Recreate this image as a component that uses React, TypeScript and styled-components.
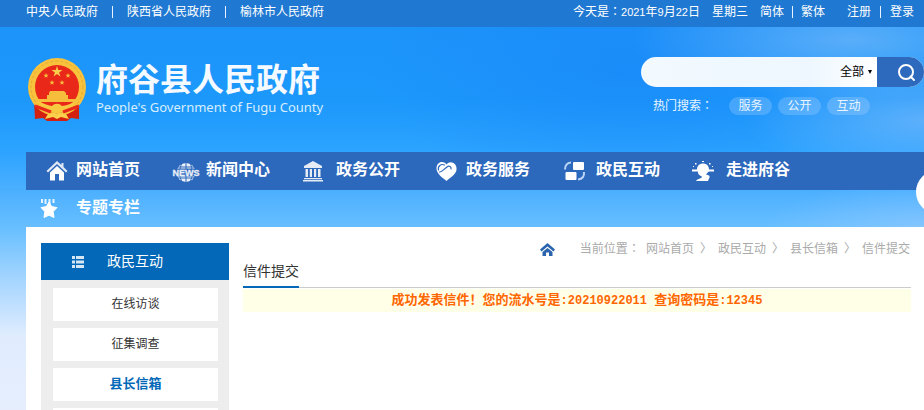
import React from "react";
import styled, { createGlobalStyle, css } from "styled-components";

const sans = `"Liberation Sans", "Noto Sans CJK SC", sans-serif`;

const GlobalStyle = createGlobalStyle`
  *, *::before, *::after { box-sizing: border-box; }
  body {
    margin: 0;
    font: 12px/18px ${sans};
    color: #333;
    background: #e6eefe;
    overflow: hidden;
  }
  a { color: inherit; text-decoration: none; }
  ul, ol { list-style: none; margin: 0; padding: 0; }
  h1, h2, p { margin: 0; font-weight: 400; }
`;

const Page = styled.div`
  position: relative;
  min-height: 100vh;
  overflow: hidden;
  display: flex;
  flex-direction: column;
  background:
    radial-gradient(ellipse 220px 60px at 92% 40px, rgba(150, 200, 250, 0.5), transparent),
    radial-gradient(ellipse 180px 60px at 100% 120px, rgba(150, 195, 250, 0.5), transparent),
    radial-gradient(ellipse 160px 50px at 100% 230px, rgba(160, 205, 255, 0.5), transparent),
    radial-gradient(ellipse 260px 120px at 68% 70px, rgba(25, 130, 248, 0.5), transparent),
    linear-gradient(#1c92f8 0, #1c98fb 100px, #2ba3ff 150px, #4fb1ff 195px, #68bfff 228px, #a5d5fe 280px, #dfecfe 335px, #e6eefe 410px);
`;

const TopBar = styled.header`
  display: flex;
  justify-content: space-between;
  height: 27px;
  padding: 3px 10px 0 26px;
  background: #1f79d2;
  color: #fff;
  white-space: nowrap;
`;

const LinkGroup = styled.nav<{ $gap: number }>`
  display: flex;
  gap: ${(p) => p.$gap}px;
`;

const Divider = styled.span`
  width: 1px;
  height: 12px;
  margin-top: 3px;
  background: #e8f3ff;
`;

const TopRight = styled.div`
  display: flex;
`;

const Today = styled.span`
  margin-right: 12px;
`;

const Digits = styled.span`
  font-size: 11px;
`;

const Colon = styled.span`
  font-family: "Noto Sans CJK TC", sans-serif;
  line-height: 1;
`;

const Account = styled.div`
  display: flex;
  margin-left: 22px;
`;

const Banner = styled.div`
  display: flex;
  justify-content: space-between;
  height: 125px;
  padding: 30px 0 0 26px;
`;

const Brand = styled.a`
  display: flex;
  gap: 10px;
  color: #f4faff;
  white-space: nowrap;
`;

const BrandText = styled.div`
  display: flex;
  flex-direction: column;
`;

const BrandName = styled.h1`
  font: 700 32px/41px "Noto Sans CJK SC", sans-serif;
`;

const BrandSub = styled.span`
  font: 13px/18px "Noto Sans", sans-serif;
  color: #d6edff;
`;

const SearchArea = styled.div`
  display: flex;
  flex-direction: column;
  gap: 10px;
  width: 283px;
`;

const SearchBox = styled.form`
  display: flex;
  height: 30px;
  border-radius: 15px;
  overflow: hidden;
  background: linear-gradient(90deg, #f2f9ff, #eef7ff 60%, #fff 85%);
`;

const SearchInput = styled.input`
  flex: 1;
  min-width: 0;
  padding: 0 14px;
  border: 0;
  outline: 0;
  background: transparent;
  font: 12px ${sans};
`;

const ScopeField = styled.label`
  display: flex;
  align-items: center;
  gap: 4px;
  padding-right: 5px;
`;

const Scope = styled.select`
  appearance: none;
  width: 24px;
  padding: 0;
  border: 0;
  background: transparent;
  color: #000;
  font: 12px/18px ${sans};
`;

const SearchButton = styled.button`
  display: flex;
  align-items: center;
  justify-content: flex-end;
  width: 47px;
  padding: 0 8px 0 0;
  border: 0;
  background: #2d69bd;
`;

const HotRow = styled.div`
  display: flex;
  gap: 6px;
  padding-left: 12px;
  color: #eaf5ff;
`;

const HotLabel = styled.span`
  width: 70px;
`;

const Pill = styled.a`
  width: 43px;
  height: 18px;
  border-radius: 9px;
  background: rgba(190, 220, 255, 0.26);
  text-align: center;
`;

const MainNav = styled.nav`
  margin-left: 26px;
  height: 75px;
  background: linear-gradient(#2c68bc 38px, transparent 38px);
`;

const NavRow = styled.ul`
  display: flex;
`;

const NavLink = styled.a`
  display: flex;
  align-items: center;
  width: 130px;
  height: 38px;
  color: #fff;
  font-size: 16px;
  font-weight: 700;
  line-height: 36px;
  white-space: nowrap;

  svg { flex: none; }
  span { padding-bottom: 2px; }
`;

const FloatTab = styled.button`
  position: absolute;
  top: 170px;
  right: -36px;
  width: 44px;
  height: 44px;
  padding: 0;
  border: 0;
  border-radius: 50%;
  background: #fff;
`;

const Content = styled.main`
  flex: 1;
  display: flex;
  gap: 14px;
  margin-left: 26px;
  padding: 16px 13px 0 15px;
  background: #fff;
`;

const Sidebar = styled.aside`
  flex: none;
  width: 188px;
  background: #ededed;
`;

const SideTitle = styled.h2`
  display: flex;
  align-items: center;
  gap: 23px;
  height: 37px;
  padding-left: 31px;
  background: #0268b7;
  color: #fff;
  font-size: 14px;
  line-height: 35px;
`;

const SideList = styled.ul`
  display: flex;
  flex-direction: column;
  gap: 7px;
  padding: 8px 11px 0 12px;
`;

const SideLink = styled.a<{ $active?: boolean }>`
  display: block;
  height: 33px;
  background: #fff;
  line-height: 32px;
  text-align: center;
  ${(p) =>
    p.$active &&
    css`
      color: #0268b7;
      font-size: 13px;
      font-weight: 700;
    `}
`;

const Article = styled.section`
  flex: 1;
  min-width: 0;
`;

const Crumbs = styled.nav`
  display: flex;
  justify-content: flex-end;
  align-items: center;
  gap: 6px;
  height: 12px;
  padding-right: 1px;
  color: #aaa;
  white-space: nowrap;
`;

const CrumbLabel = styled.span`
  margin-left: 19px;
`;

const TitleBar = styled.div`
  display: flex;
  height: 33px;
  border-bottom: 1px solid #ccc;
`;

const Title = styled.h2`
  height: 33px;
  padding-top: 5px;
  border-bottom: 2px solid #0268b7;
  font-size: 14px;
  line-height: 22px;
`;

const Notice = styled.p`
  margin-top: 1px;
  height: 23px;
  background: #ffffe8;
  color: #f60;
  font-size: 13px;
  font-weight: 700;
  line-height: 22px;
  text-align: center;
  white-space: pre;
`;

const Mono = styled.span`
  font-family: "Liberation Mono", monospace;
  font-size: 12px;
`;

const Emblem = () => (
  <svg width="60" height="66" viewBox="0 0 60 66" aria-hidden="true">
    <path d="M8 44 L9 62 L17 61 L21 64 L41 64 L45 61 L53 62 L53 44Z" fill="#d3200f" />
    <circle cx="31" cy="30" r="29" fill="#f7c23c" />
    <circle cx="31" cy="30" r="26" fill="none" stroke="#e9aa34" strokeWidth="1" strokeDasharray="3 2" />
    <circle cx="31" cy="30" r="22" fill="#e9281a" />
    <path d="M31 9 L32.300 13 L36.500 13 L33.100 15.500 L34.400 19.500 L31 17 L27.600 19.500 L28.900 15.500 L25.500 13 L29.700 13Z" fill="#f9ce4a" />
    <g fill="#f6bd3c">
      <path id="star" d="M20 16 l.7 1.700 1.800.1-1.400 1.200.5 1.800-1.600-1-1.600 1 .5-1.800-1.400-1.200 1.800-.1z" />
      <use href="#star" x="22" />
      <use href="#star" x="6" y="7" />
      <use href="#star" x="16" y="7" />
      <path d="M24 34h14l2 2v2h2v4h9l-2 3H13l-2-3h10v-4h2v-2z" />
    </g>
    <path d="M12 45 C18 46 23 49 26 49 A6 5 0 0 1 36 49 C40 49 45 46 50 45 L44 53 L37 54 A7 4 0 0 1 25 54 L18 53Z" fill="#f7c840" />
    <path d="M9 49 L25 55 M53 49 L37 55" stroke="#e9281a" strokeWidth="3" />
    <path d="M22 57 L29 56 L31 58 L33 56 L40 57 L43 62 L35 60 L31 62 L27 60 L19 62Z" fill="#fbd04c" />
  </svg>
);

const HomeArt = () => (
  <g>
    <path d="M31 9 L20.500 19 L22 20.500 L31 12 L40 20.500 L41.500 19 L37.500 15 V11 H35.500 V13Z" opacity="0.85" />
    <path d="M31 14 L24 20.500 V28.500 H29 V22 H33 V28.500 H38 V20.500Z" />
  </g>
);

const NewsArt = () => (
  <g opacity="0.9">
    <circle cx="30" cy="20.500" r="9.500" />
    <path d="M30 10v21M20 15h20M20 26h20M26 11c-3 6-3 13 0 19M34 11c3 6 3 13 0 19" stroke="#2c68bc" strokeWidth="1" fill="none" />
    <rect x="15" y="16.500" width="30" height="8" fill="#2c68bc" />
    <text x="30" y="24" textAnchor="middle" fontSize="9" fontFamily="Liberation Sans" stroke="#fff" strokeWidth="0.300">NEWS</text>
  </g>
);

const BankArt = () => (
  <g opacity="0.88">
    <path d="M27 9 L18 14 V16 H36 V14Z" />
    <path d="M19.500 17h2.500v8h-2.500zM23.800 17h2.200v8h-2.200zM28 17h2.200v8H28zM32 17h2.500v8H32zM18 26h18v1.200H18zM17 28h20v1.500H17z" />
  </g>
);

const HeartArt = () => (
  <g>
    <path d="M30.500 12.500 C34 8 41.500 11 40.500 18 C40 22 34 26 30.500 29 C27 26 20.500 22 20.500 16.500 C20.500 10 27 8 30.500 12.500Z" />
    <path d="M22.500 18 C21.500 14 25 11.500 28.500 13 M23.500 20 C26 20 28 17 31 15 C33 13 35.500 15 35 17" fill="none" stroke="#2c68bc" strokeWidth="1.200" strokeLinecap="round" />
  </g>
);

const SwapArt = () => (
  <g>
    <rect x="27" y="10" width="11" height="8" rx="1" />
    <rect x="19.500" y="20" width="11" height="8" rx="1" />
    <path d="M19 17.500 C19 13 21 11 25 10.500M38 20 C38.500 25 36 27 32 27.500" fill="none" stroke="#b9d4f5" strokeWidth="2" />
  </g>
);

const SunArt = () => (
  <g>
    <path d="M16 17.500h5c0-8 12-8 12 0h5v2H16z" />
    <path d="M22 19h11l-3 3.500c6 1 3 3.500 2 6.500H20c1-2 6-3 6-4s-5-2-4-6z" />
    <path d="M19 11h1.500v1.500H19zM26 9h2v1h-2zM33 11h1.500v1.500H33zM17 14h1v1h-1zM36 14h1v1h-1z" />
  </g>
);

const StarArt = () => (
  <g>
    <path d="M15 9h2v4h-2zM18.500 9h2v5h-2zM22.500 9h2v5h-2zM26.500 9h2v4h-2z" opacity="0.85" />
    <path d="M23 12l2.600 4.600 5.400 1-3.800 4 .8 5.900-5-2.300-5 2.300.8-5.900-3.800-4 5.400-1z" stroke="#fff" strokeLinejoin="round" />
  </g>
);

const NavIcon = ({ children }: { children: React.ReactNode }) => (
  <svg width="50" height="38" viewBox="0 0 50 38" fill="#fff" aria-hidden="true">
    {children}
  </svg>
);

const navItems = [
  { label: "网站首页", art: <HomeArt /> },
  { label: "新闻中心", art: <NewsArt /> },
  { label: "政务公开", art: <BankArt /> },
  { label: "政务服务", art: <HeartArt /> },
  { label: "政民互动", art: <SwapArt /> },
  { label: "走进府谷", art: <SunArt /> },
];

const crumbs = ["网站首页", "政民互动", "县长信箱"];

export default function App() {
  return (
    <>
      <GlobalStyle />
      <Page>
        <TopBar>
          <LinkGroup $gap={14}>
            <a href="#">中央人民政府</a>
            <Divider />
            <a href="#">陕西省人民政府</a>
            <Divider />
            <a href="#">榆林市人民政府</a>
          </LinkGroup>
          <TopRight>
            <Today>
              今天是<Colon>：</Colon><Digits>2021</Digits>年<Digits>9</Digits>月<Digits>22</Digits>日
            </Today>
            <Today>星期三</Today>
            <LinkGroup $gap={8}>
              <a href="#">简体</a>
              <Divider />
              <a href="#">繁体</a>
            </LinkGroup>
            <Account>
              <LinkGroup $gap={9}>
                <a href="#">注册</a>
                <Divider />
                <a href="#">登录</a>
              </LinkGroup>
            </Account>
          </TopRight>
        </TopBar>

        <Banner>
          <Brand href="#">
            <Emblem />
            <BrandText>
              <BrandName>府谷县人民政府</BrandName>
              <BrandSub>People's Government of Fugu County</BrandSub>
            </BrandText>
          </Brand>
          <SearchArea>
            <SearchBox>
              <SearchInput type="text" aria-label="搜索" />
              <ScopeField>
                <Scope aria-label="搜索范围">
                  <option>全部</option>
                </Scope>
                <svg width="4" height="4" viewBox="0 0 4 4" aria-hidden="true">
                  <path d="M0 0h4L2 4z" />
                </svg>
              </ScopeField>
              <SearchButton type="button" aria-label="搜索">
                <svg width="19" height="19" viewBox="0 0 19 19" fill="none" stroke="#fff" strokeWidth="2" aria-hidden="true">
                  <circle cx="9" cy="9" r="7" />
                  <path d="M13.500 13.500 L17 17" strokeLinecap="round" />
                </svg>
              </SearchButton>
            </SearchBox>
            <HotRow>
              <HotLabel>热门搜索<Colon>：</Colon></HotLabel>
              <Pill href="#">服务</Pill>
              <Pill href="#">公开</Pill>
              <Pill href="#">互动</Pill>
            </HotRow>
          </SearchArea>
        </Banner>

        <MainNav>
          <NavRow>
            {navItems.map((item) => (
              <li key={item.label}>
                <NavLink href="#">
                  <NavIcon>{item.art}</NavIcon>
                  <span>{item.label}</span>
                </NavLink>
              </li>
            ))}
          </NavRow>
          <NavRow>
            <li>
              <NavLink href="#">
                <NavIcon>
                  <StarArt />
                </NavIcon>
                <span>专题专栏</span>
              </NavLink>
            </li>
          </NavRow>
        </MainNav>

        <Content>
          <Sidebar>
            <SideTitle>
              <svg width="12" height="12" viewBox="0 0 12 12" fill="#d5e6f5" aria-hidden="true">
                <path d="M0 0h3v3H0zM4 0h8v3H4zM0 4.500h3v3H0zM4 4.500h8v3H4zM0 9h3v3H0zM4 9h8v3H4z" />
              </svg>
              政民互动
            </SideTitle>
            <SideList>
              <li><SideLink href="#">在线访谈</SideLink></li>
              <li><SideLink href="#">征集调查</SideLink></li>
              <li><SideLink href="#" $active>县长信箱</SideLink></li>
              <li><SideLink href="#" aria-label="更多" /></li>
            </SideList>
          </Sidebar>

          <Article>
            <Crumbs>
              <svg width="15" height="13" viewBox="0 0 15 13" fill="#2a64ae" aria-hidden="true">
                <path d="M7.500 0 L0 6.500 L1.500 8.500 L7.500 3.500 L13.500 8.500 L15 6.500Z" />
                <path d="M7.500 5 L2.500 9 V13 H6 V9.500 H9 V13 H12.500 V9Z" />
              </svg>
              <CrumbLabel>当前位置<Colon>：</Colon></CrumbLabel>
              {crumbs.map((name) => (
                <React.Fragment key={name}>
                  <a href="#">{name}</a>
                  <span>〉</span>
                </React.Fragment>
              ))}
              <span>信件提交</span>
            </Crumbs>
            <TitleBar>
              <Title>信件提交</Title>
            </TitleBar>
            <Notice>
              成功发表信件！您的流水号是<Mono>:20210922011 </Mono>查询密码是<Mono>:12345</Mono>
            </Notice>
          </Article>
        </Content>
        <FloatTab type="button" aria-label="展开" />
      </Page>
    </>
  );
}
